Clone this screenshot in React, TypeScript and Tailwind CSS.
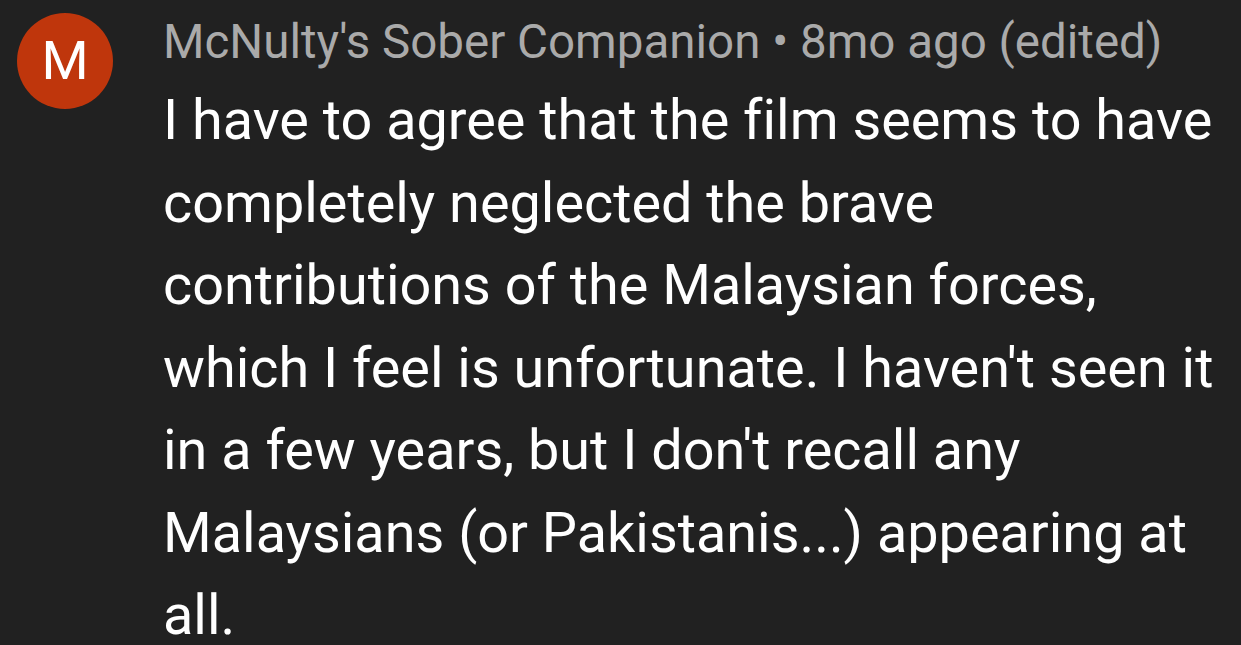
export default function App() {
  return (
    <div className="w-[1241px] min-h-[645px] bg-[#212121] flex items-start pl-[17px] pt-[13px] [font-variant-ligatures:none]" style={{ fontFamily: "Roboto, 'Noto Sans', sans-serif" }}>
      <div className="w-[96px] h-[96px] rounded-full bg-[#bf360c] flex items-center justify-center text-white text-[54px] shrink-0 leading-none">
        M
      </div>
      <div className="ml-[50px] flex flex-col">
        <div className="text-[#aaaaaa] text-[47.5px] leading-[58px] mb-[8px] whitespace-nowrap">
          McNulty's Sober Companion • 8mo ago (edited)
        </div>
        <div className="text-white text-[55.8px] leading-[82.5px] w-[1070px]">
          I have to agree that the film seems to have completely neglected the brave contributions of the Malaysian forces, which I feel is unfortunate. I haven't seen it in a few years, but I don't recall any Malaysians (or Pakistanis...) appearing at all.
        </div>
      </div>
    </div>
  );
}
